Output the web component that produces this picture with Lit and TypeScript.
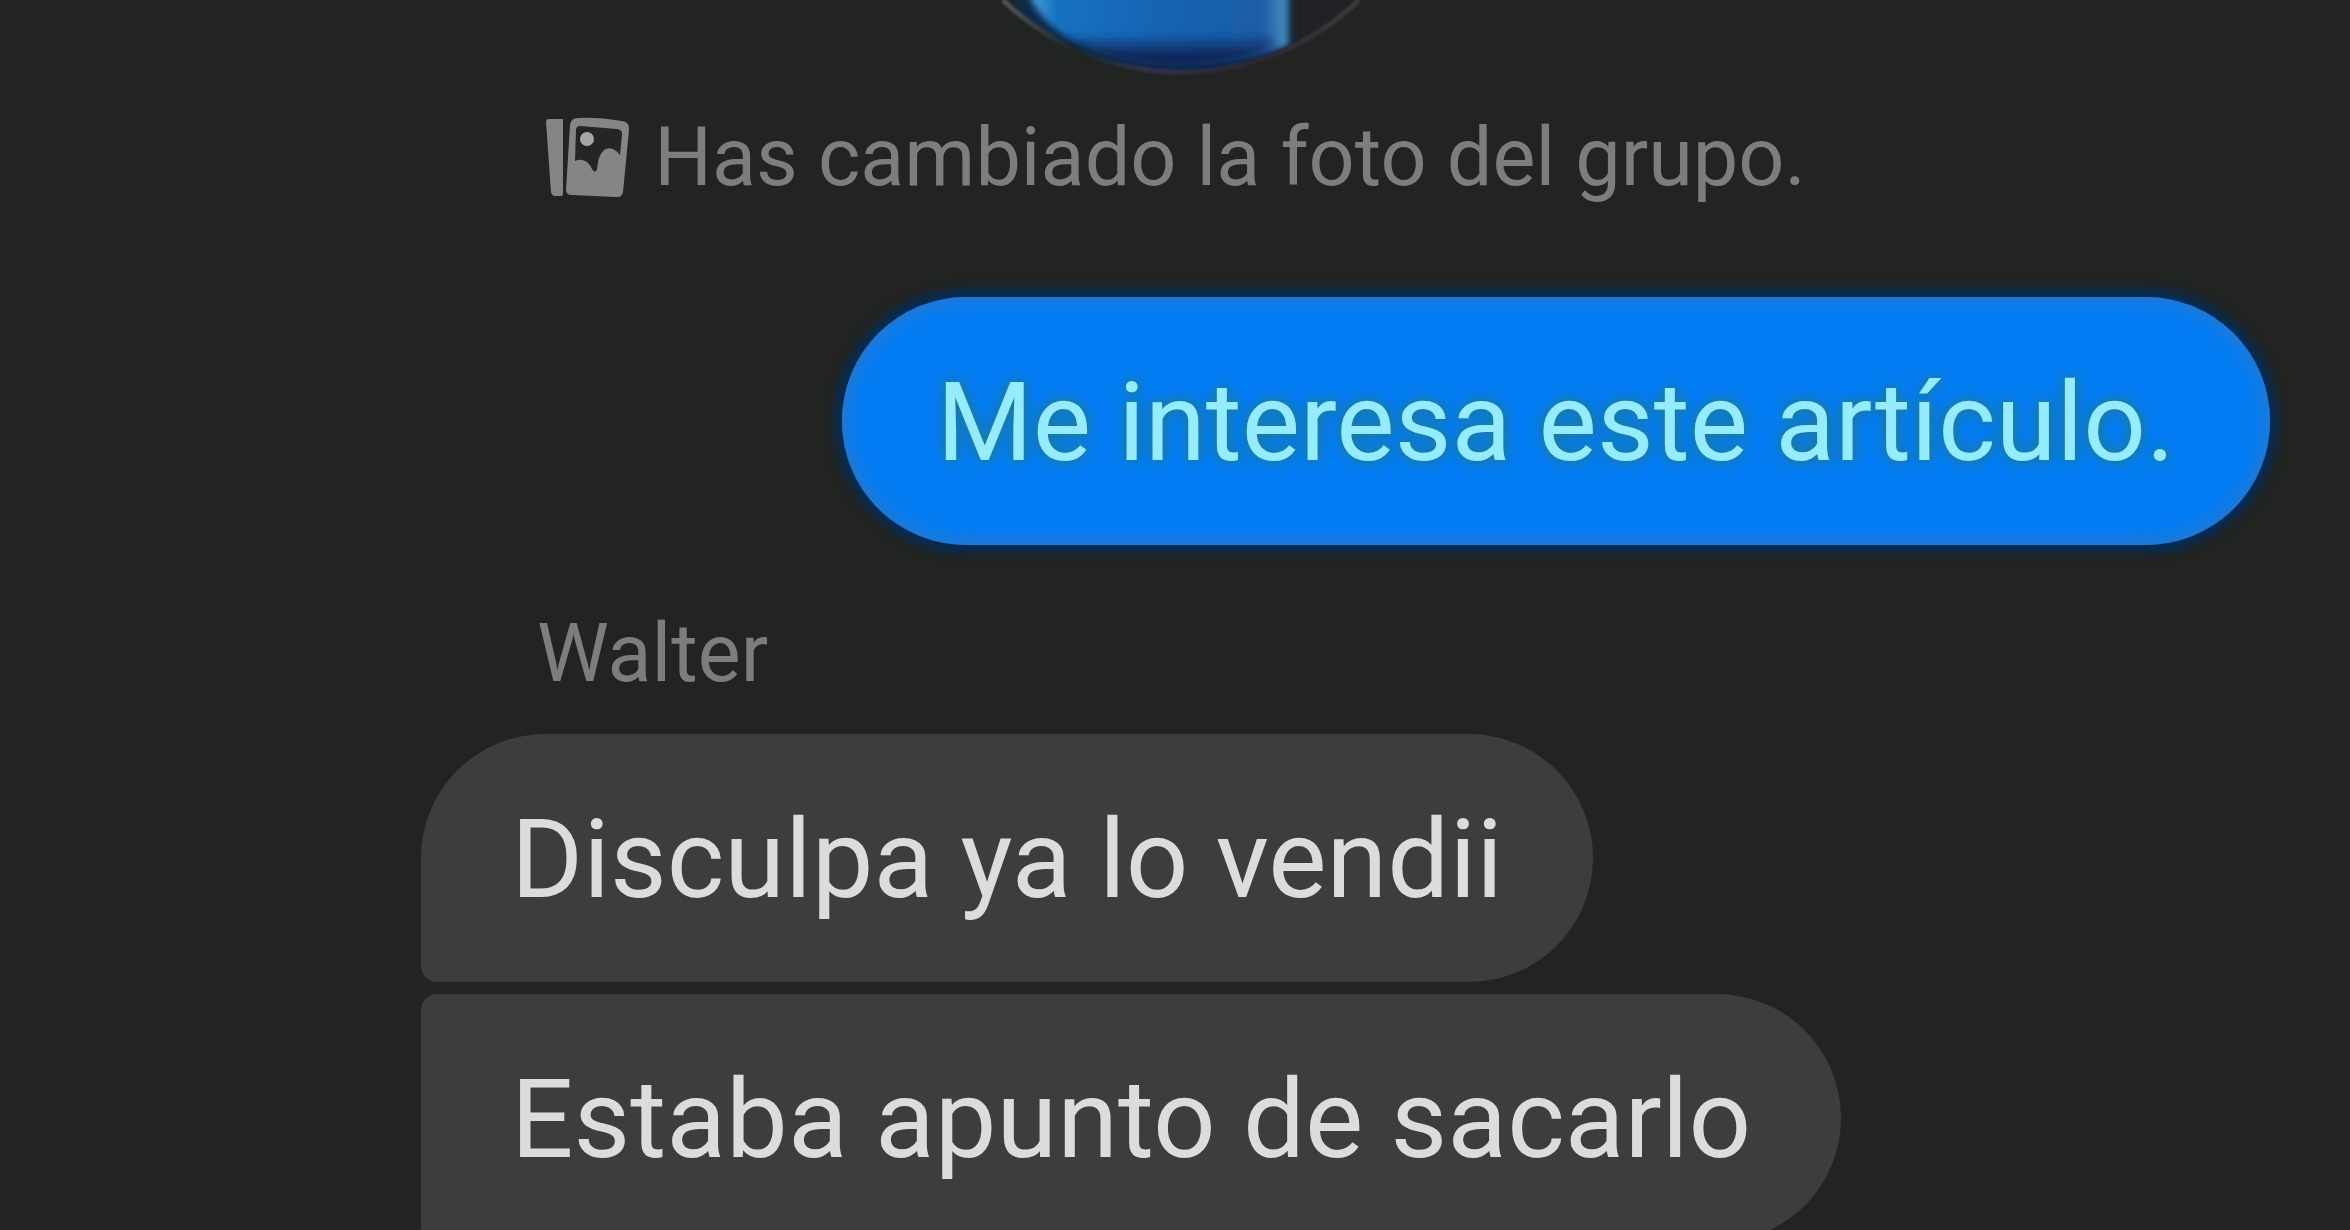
import { LitElement, html, css } from "lit";
import { customElement, property } from "lit/decorators.js";

@customElement("chat-bubble")
class ChatBubble extends LitElement {
  @property() side = "in";
  @property() place = "first";

  static styles = css`
    :host {
      display: flex;
    }
    .bubble {
      margin: 0;
      padding: 58px 90px 54px;
      border-radius: 124px;
      background: #3c3e3b;
      color: #dcdddb;
      font-size: 110px;
      line-height: 136px;
      white-space: nowrap;
    }
    .in.first {
      border-bottom-left-radius: 16px;
    }
    .in.middle {
      border-top-left-radius: 16px;
      border-bottom-left-radius: 16px;
    }
    .out {
      margin-left: auto;
      padding-left: 95px;
      padding-right: 95px;
      background: #047df4;
      color: #94ecfe;
      text-shadow:
        0 0 8px #1c7a9c,
        0 0 16px #1c7a9c;
      box-shadow:
        0 0 10px 8px #042c54,
        inset 0 0 16px 5px #2678cc;
    }
  `;

  render() {
    return html`<p class="bubble ${this.side} ${this.place}"><slot></slot></p>`;
  }
}

@customElement("app-root")
class AppRoot extends LitElement {
  static styles = css`
    :host {
      display: block;
      height: 100vh;
      overflow: hidden;
      background: #222421;
      font-family: Roboto, "Liberation Sans", sans-serif;
    }
    .chat {
      display: flex;
      flex-direction: column;
    }
    .avatar {
      display: block;
      align-self: center;
      width: 540px;
      height: 80px;
    }
    .notice {
      display: flex;
      align-items: center;
      justify-content: center;
      gap: 24px;
      margin: 29px 0 91px;
      color: #7d7e7c;
      font-size: 81px;
      line-height: 97px;
      white-space: nowrap;
    }
    .notice svg {
      flex: none;
      width: 86px;
      height: 84px;
    }
    .sent {
      padding-right: 80px;
    }
    .received {
      display: flex;
      flex-direction: column;
      gap: 12px;
      padding: 60px 0 0 421px;
    }
    .sender {
      margin: 0 0 20px;
      padding-left: 116px;
      color: #7d7e7c;
      font-size: 81px;
      font-weight: 400;
      line-height: 97px;
    }
  `;

  render() {
    return html`
      <main class="chat">
        <svg class="avatar" viewBox="0 0 540 80" role="img" aria-label="Foto del grupo">
          <defs>
            <clipPath id="disc"><circle cx="276" cy="-186" r="256" /></clipPath>
            <linearGradient id="fill" x1="0" x2="1" y1="0" y2="0">
              <stop offset="0" stop-color="#4a9fd6" />
              <stop offset="0.1" stop-color="#1272c0" />
              <stop offset="0.5" stop-color="#1464b4" />
              <stop offset="0.9" stop-color="#1c5ca4" />
              <stop offset="1" stop-color="#4a90c0" />
            </linearGradient>
            <linearGradient id="shade" x1="0" x2="0" y1="0" y2="1">
              <stop offset="0.55" stop-color="#10285a" stop-opacity="0" />
              <stop offset="0.85" stop-color="#10285a" />
            </linearGradient>
            <linearGradient id="rim" x1="0" x2="1" y1="0" y2="0">
              <stop offset="0" stop-color="#55555a" />
              <stop offset="0.2" stop-color="#14282e" />
              <stop offset="0.4" stop-color="#33304c" />
              <stop offset="0.7" stop-color="#2a2838" />
              <stop offset="1" stop-color="#3c3a40" />
            </linearGradient>
            <filter id="soft" x="-10%" y="-20%" width="120%" height="140%">
              <feGaussianBlur stdDeviation="3" />
            </filter>
            <filter id="thin" x="-10%" y="-10%" width="120%" height="120%">
              <feGaussianBlur stdDeviation="1" />
            </filter>
          </defs>
          <g clip-path="url(#disc)">
            <rect x="112" y="-20" width="276" height="100" fill="#08294a" filter="url(#soft)" />
            <path d="M126 -20H383V46Q340 62 270 62Q200 58 160 36Q136 20 126 0Z" fill="url(#fill)" filter="url(#soft)" />
            <path d="M160 -6H370V46Q330 66 270 66Q200 64 160 36Z" fill="url(#shade)" filter="url(#soft)" />
            <rect x="392" y="-20" width="160" height="100" fill="#222226" filter="url(#soft)" />
          </g>
          <path d="M98 0A256 256 0 0 0 454 0" fill="none" stroke="url(#rim)" stroke-width="5" filter="url(#thin)" />
        </svg>
        <p class="notice">
          <svg viewBox="0 0 86 84" aria-hidden="true">
            <path d="M2 6Q2 3 5 3H19V78Q19 80 16 80H11Q8 80 7 76Z" fill="#858684" />
            <path d="M26 9Q27 2 34 2Q56 1 78 5Q86 6 85 14L79 76Q78 82 72 81L28 79Q22 79 22 74Z" fill="#858684" />
            <path d="M32 14Q32 10 36 10L73 13Q79 14 78 19L76 39Q68 29 60 34Q54 39 53 54Q50 58 47 51Q41 41 31 45Z" fill="#252624" />
            <circle cx="43" cy="23" r="7" fill="#a6a7a5" />
          </svg>
          <span>Has cambiado la foto del grupo.</span>
        </p>
        <section class="sent">
          <chat-bubble side="out">Me interesa este artículo.</chat-bubble>
        </section>
        <section class="received">
          <h2 class="sender">Walter</h2>
          <chat-bubble place="first">Disculpa ya lo vendii</chat-bubble>
          <chat-bubble place="middle">Estaba apunto de sacarlo</chat-bubble>
        </section>
      </main>
    `;
  }
}
